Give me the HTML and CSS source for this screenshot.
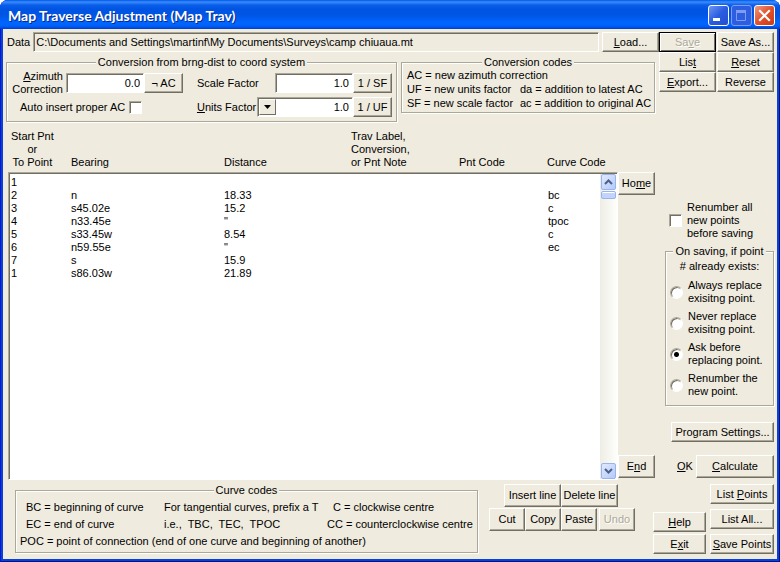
FILE: index.html
```html
<!DOCTYPE html>
<html lang="en">
<head>
    <meta charset="UTF-8">
    <meta name="viewport" content="width=device-width, initial-scale=1.0">
    <title>Map Traverse Adjustment (Map Trav)</title>
    <link rel="stylesheet" href="styles.css">
</head>
<body>
    <div class="window">
        <header class="titlebar">
            <h1>Map Traverse Adjustment (Map Trav)</h1>
            <button type="button" class="caption-btn" aria-label="Minimize">
                <svg width="19" height="19" viewBox="0 0 19 19"><path d="M4 12h7v3H4z" fill="#fff"/></svg>
            </button>
            <button type="button" class="caption-btn maximize" aria-label="Maximize" disabled>
                <svg width="19" height="19" viewBox="0 0 19 19"><path d="M4.500 5.500h9v9h-9z" fill="none" stroke="#7f9df0"/><path d="M4 4h10v3H4z" fill="#7f9df0"/></svg>
            </button>
            <button type="button" class="caption-btn close" aria-label="Close">
                <svg width="19" height="19" viewBox="0 0 19 19"><path d="M5 5l9 9M14 5l-9 9" stroke="#fff" stroke-width="2.200" stroke-linecap="square"/></svg>
            </button>
        </header>

        <main class="client">
            <section class="top">
                <div class="top-left">
                    <div class="data-row">
                        <label for="data-file">Data</label>
                        <input id="data-file" class="sunken path" type="text" readonly value="C:\Documents and Settings\martinf\My Documents\Surveys\camp chiuaua.mt">
                        <button type="button" class="btn load"><u>L</u>oad...</button>
                    </div>
                    <div class="groups">
                        <fieldset class="conversion">
                            <legend>Conversion from brng-dist to coord system</legend>
                            <div class="conv-cols">
                                <div class="conv-left">
                                    <div class="conv-row">
                                        <label for="azimuth" class="azimuth-label"><u>A</u>zimuth<br>Correction</label>
                                        <input id="azimuth" class="sunken number" type="text" value="0.0">
                                        <button type="button" class="btn unit">¬ AC</button>
                                    </div>
                                    <div class="conv-row auto-row">
                                        <label for="auto-ac">Auto insert proper AC</label>
                                        <input id="auto-ac" type="checkbox">
                                    </div>
                                </div>
                                <div class="conv-right">
                                    <div class="conv-row">
                                        <label for="scale">Scale Factor</label>
                                        <input id="scale" class="sunken number" type="text" value="1.0">
                                        <button type="button" class="btn unit">1 / SF</button>
                                    </div>
                                    <div class="conv-row">
                                        <label for="units"><u>U</u>nits Factor</label>
                                        <div class="sunken combo">
                                            <span class="combo-arrow" aria-hidden="true"><svg width="7" height="4" viewBox="0 0 7 4"><path d="M0 0h7L3.500 4z"/></svg></span>
                                            <select id="units"><option>1.0</option></select>
                                        </div>
                                        <button type="button" class="btn unit">1 / UF</button>
                                    </div>
                                </div>
                            </div>
                        </fieldset>
                        <fieldset class="codes">
                            <legend>Conversion codes</legend>
                            <div class="codes-grid">
                                <span class="wide">AC = new azimuth correction</span>
                                <span>UF = new units factor</span>
                                <span>da = addition to latest AC</span>
                                <span>SF = new scale factor</span>
                                <span>ac = addition to original AC</span>
                            </div>
                        </fieldset>
                    </div>
                </div>
                <div class="file-buttons">
                    <button type="button" class="btn default" disabled>Sa<u>v</u>e</button>
                    <button type="button" class="btn">Save As...</button>
                    <button type="button" class="btn">Lis<u>t</u></button>
                    <button type="button" class="btn"><u>R</u>eset</button>
                    <button type="button" class="btn"><u>E</u>xport...</button>
                    <button type="button" class="btn">Reverse</button>
                </div>
            </section>

            <section class="middle">
                <div class="list-area">
                    <div class="list-head">
                        <span class="start">Start Pnt<br>or<br>To Point</span>
                        <span>Bearing</span>
                        <span>Distance</span>
                        <span>Trav Label,<br>Conversion,<br>or Pnt Note</span>
                        <span>Pnt Code</span>
                        <span>Curve Code</span>
                    </div>
                    <div class="list sunken">
                        <table class="points">
                            <colgroup><col class="c-point"><col class="c-bearing"><col class="c-distance"><col class="c-label"><col class="c-code"><col></colgroup>
                            <tbody>
                                <tr><td>1</td><td></td><td></td><td></td><td></td><td></td></tr>
                                <tr><td>2</td><td>n</td><td>18.33</td><td></td><td></td><td>bc</td></tr>
                                <tr><td>3</td><td>s45.02e</td><td>15.2</td><td></td><td></td><td>c</td></tr>
                                <tr><td>4</td><td>n33.45e</td><td>"</td><td></td><td></td><td>tpoc</td></tr>
                                <tr><td>5</td><td>s33.45w</td><td>8.54</td><td></td><td></td><td>c</td></tr>
                                <tr><td>6</td><td>n59.55e</td><td>"</td><td></td><td></td><td>ec</td></tr>
                                <tr><td>7</td><td>s</td><td>15.9</td><td></td><td></td><td></td></tr>
                                <tr><td>1</td><td>s86.03w</td><td>21.89</td><td></td><td></td><td></td></tr>
                            </tbody>
                        </table>
                        <div class="scrollbar">
                            <button type="button" class="scroll-btn" aria-label="Scroll up"><svg width="9" height="6" viewBox="0 0 9 6"><path d="M1 5l3.500-3.500L8 5" fill="none" stroke="#4d6185" stroke-width="2"/></svg></button>
                            <div class="thumb"></div>
                            <button type="button" class="scroll-btn down" aria-label="Scroll down"><svg width="9" height="6" viewBox="0 0 9 6"><path d="M1 1l3.500 3.500L8 1" fill="none" stroke="#4d6185" stroke-width="2"/></svg></button>
                        </div>
                    </div>
                </div>
                <div class="jump">
                    <button type="button" class="btn tall">Ho<u>m</u>e</button>
                    <button type="button" class="btn tall">E<u>n</u>d</button>
                </div>
                <aside class="side">
                    <div class="option">
                        <input id="renumber" type="checkbox">
                        <label for="renumber">Renumber all<br>new points<br>before saving</label>
                    </div>
                    <fieldset class="saving">
                        <legend>On saving, if point</legend>
                        <p># already exists:</p>
                        <div class="option">
                            <input id="always" type="radio" name="exists">
                            <label for="always">Always replace<br>exisitng point.</label>
                        </div>
                        <div class="option">
                            <input id="never" type="radio" name="exists">
                            <label for="never">Never replace<br>exisitng point.</label>
                        </div>
                        <div class="option">
                            <input id="ask" type="radio" name="exists" checked>
                            <label for="ask">Ask before<br>replacing point.</label>
                        </div>
                        <div class="option">
                            <input id="new-point" type="radio" name="exists">
                            <label for="new-point">Renumber the<br>new point.</label>
                        </div>
                    </fieldset>
                    <button type="button" class="btn settings">Program Settings...</button>
                    <div class="ok-row">
                        <span><u>O</u>K</span>
                        <button type="button" class="btn tall"><u>C</u>alculate</button>
                    </div>
                </aside>
            </section>

            <section class="bottom">
                <fieldset class="curves">
                    <legend>Curve codes</legend>
                    <div class="curve-grid">
                        <span>BC = beginning of curve</span>
                        <span>For tangential curves, prefix a T</span>
                        <span class="clockwise">C = clockwise centre</span>
                        <span>EC = end of curve</span>
                        <span>i.e.,&nbsp; TBC,&nbsp; TEC,&nbsp; TPOC</span>
                        <span>CC = counterclockwise centre</span>
                    </div>
                    <p>POC = point of connection (end of one curve and beginning of another)</p>
                </fieldset>
                <div class="edit-buttons">
                    <div class="line-row">
                        <button type="button" class="btn tall">Insert line</button>
                        <button type="button" class="btn tall">Delete line</button>
                    </div>
                    <div class="clip-row">
                        <button type="button" class="btn tall">Cut</button>
                        <button type="button" class="btn tall">Copy</button>
                        <button type="button" class="btn tall">Paste</button>
                        <button type="button" class="btn tall" disabled>Undo</button>
                    </div>
                </div>
                <div class="exit-buttons">
                    <button type="button" class="btn"><u>H</u>elp</button>
                    <button type="button" class="btn">E<u>x</u>it</button>
                </div>
                <div class="point-buttons">
                    <button type="button" class="btn">List <u>P</u>oints</button>
                    <button type="button" class="btn">List All...</button>
                    <button type="button" class="btn"><u>S</u>ave Points</button>
                </div>
            </section>
        </main>
    </div>
</body>
</html>
```
FILE: styles.css
```css
* {
    box-sizing: border-box;
}
body {
    margin: 0;
    background: #fff;
    color: #000;
    font: 11px/13px "Liberation Sans", Arial, sans-serif;
}
input, select, button {
    margin: 0;
    font: inherit;
    color: inherit;
}
p {
    margin: 0;
}
.window {
    display: flex;
    flex-direction: column;
    min-height: 100vh;
    padding: 0 3px 3px;
    background: #0840d8;
    border-radius: 8px 8px 0 0;
    box-shadow: inset 1px 0 #0019cf, inset -1px -1px #00138c;
    overflow: hidden;
}

/* Title bar */
.titlebar {
    display: flex;
    align-items: center;
    gap: 2px;
    height: 29px;
    margin: 0 -3px;
    padding: 2px 5px 0 8px;
    background: linear-gradient(#0058e6 0, #3a8cff 2px, #0a5fe8 5px, #0054e3 9px, #0055e5 15px, #0066ff 23px, #0060f8 26px, #003dd0 29px);
}
.titlebar h1 {
    flex: 1;
    margin: 0;
    color: #fff;
    font: 700 14px/18px Lato, "Open Sans", sans-serif;
    text-shadow: 1px 1px #0a2a8c;
}
.caption-btn {
    width: 21px;
    height: 21px;
    padding: 0;
    border: 1px solid #fff;
    border-radius: 3px;
    background: linear-gradient(135deg, #6f97f5, #2a5ce0 50%, #2250d0);
}
.caption-btn svg {
    display: block;
}
.caption-btn.maximize {
    border-color: #7f9df0;
    background: #2d5de0;
}
.caption-btn.close {
    background: linear-gradient(135deg, #f09a80, #e2502c 50%, #c83c14);
}

/* Controls */
.client {
    flex: 1;
    display: flex;
    flex-direction: column;
    padding: 3px 3px 5px 3px;
    background: #efebde;
}
.btn {
    height: 20px;
    padding: 0;
    border: 1px solid;
    border-color: #fff #716f64 #716f64 #fff;
    background: #efebde;
    box-shadow: inset -1px -1px #aca899;
    text-align: center;
    white-space: nowrap;
}
.btn.tall {
    height: 23px;
}
.btn:disabled {
    color: #aca899;
    text-shadow: 1px 1px #fff;
}
.btn.default {
    border-color: #000;
    box-shadow: inset 1px 1px #fff, inset -1px -1px #716f64;
}
.sunken {
    border: 1px solid;
    border-color: #aca899 #fff #fff #aca899;
    border-radius: 0;
    box-shadow: inset 1px 1px #716f64;
    background: #fff;
}
input[type="checkbox"], input[type="radio"] {
    appearance: none;
    flex: none;
    width: 13px;
    height: 13px;
    border: 1px solid;
    border-color: #aca899 #fff #fff #aca899;
    background: #fff;
    box-shadow: inset 1px 1px #716f64;
}
input[type="radio"] {
    border-radius: 50%;
}
input[type="radio"]:checked {
    background: radial-gradient(circle, #000 2px, #fff 3px);
}
fieldset {
    min-width: 0;
    margin: 0;
    padding: 0;
    border: 1px solid #aca899;
    box-shadow: 1px 1px #fff, inset 1px 1px #fff;
}
legend {
    margin: 0 auto;
    padding: 0 2px;
    background: #efebde;
}

/* File and conversion */
.top {
    display: flex;
}
.top-left {
    flex: 1;
}
.data-row {
    display: flex;
    align-items: center;
    padding-left: 1px;
}
.path {
    flex: 1;
    height: 20px;
    margin: 0 3px;
    padding: 0 2px;
    background: #efebde;
}
.load {
    width: 57px;
}
.groups {
    display: flex;
    align-items: flex-start;
    gap: 4px;
    padding: 4px 4px 0 0;
}
.conversion {
    flex: 392;
}
.conv-cols {
    display: flex;
    justify-content: space-between;
    padding: 1px 4px 4px 5px;
}
.conv-left, .conv-right {
    display: flex;
    flex-direction: column;
}
.conv-right {
    gap: 4px;
    padding-top: 3px;
    width: 195px;
}
.conv-left {
    gap: 2px;
}
.conv-row {
    display: flex;
    align-items: center;
    justify-content: space-between;
}
.azimuth-label {
    width: 51px;
    margin-right: 3px;
    text-align: right;
}
.number {
    width: 78px;
    height: 20px;
    padding: 0 3px;
    text-align: right;
}
.conv-right .number {
    margin-left: auto;
}
.unit {
    width: 39px;
}
.auto-row {
    justify-content: flex-start;
    gap: 4px;
    padding: 3px 0 0 8px;
}
.combo {
    display: flex;
    width: 96px;
    height: 20px;
    margin-left: auto;
    padding: 1px;
}
.combo-arrow {
    display: grid;
    place-items: center;
    width: 17px;
    border: 1px solid;
    border-color: #fff #716f64 #716f64 #fff;
    background: #efebde;
}
.combo select {
    flex: 1;
    appearance: none;
    padding: 0 2px;
    border: 0;
    background: transparent;
    text-align: right;
    text-align-last: right;
}
.codes {
    flex: 254;
}
.codes-grid {
    display: grid;
    grid-template-columns: 113px 1fr;
    grid-auto-rows: 14px;
    padding: 0 0 1px 5px;
    white-space: nowrap;
}
.codes-grid .wide {
    grid-column: 1 / -1;
}
.file-buttons {
    display: grid;
    grid-template-columns: 57px 57px;
    align-content: start;
    column-gap: 1px;
}

/* Traverse list */
.middle {
    flex: 1;
    display: flex;
    padding: 8px 0 0 2px;
}
.list-area {
    flex: 1;
    display: flex;
    flex-direction: column;
}
.list-head {
    display: grid;
    grid-template-columns: 60px 153px 127px 108px 88px 1fr;
    align-items: end;
    padding: 0 0 3px 3px;
}
.list-head .start {
    justify-self: start;
    text-align: center;
}
.list {
    flex: 1;
    display: flex;
    align-items: flex-start;
    padding: 1px 0 0 1px;
}
.points {
    flex: 1;
    margin-top: 2px;
    border-collapse: collapse;
    table-layout: fixed;
}
.points td {
    height: 13px;
    padding: 0 1px;
}
.c-point { width: 60px; }
.c-bearing { width: 153px; }
.c-distance { width: 127px; }
.c-label { width: 108px; }
.c-code { width: 89px; }
.scrollbar {
    align-self: stretch;
    display: flex;
    flex-direction: column;
    width: 17px;
    padding: 0 1px;
    background: linear-gradient(90deg, #eeede5, #fefefb);
}
.scroll-btn {
    display: grid;
    place-items: center;
    height: 16px;
    padding: 0;
    border: 1px solid #98b4ef;
    border-radius: 2px;
    background: linear-gradient(135deg, #e0eaff, #b4c9fb);
}
.thumb {
    height: 8px;
    margin-top: 1px;
    border: 1px solid #98b4ef;
    border-radius: 2px;
    background: #c2d4fc;
    box-shadow: inset 0 1px #fff;
}
.scroll-btn.down {
    margin-top: auto;
}
.jump {
    display: flex;
    flex-direction: column;
    justify-content: space-between;
    width: 37px;
    padding: 42px 0 2px;
}

/* Saving options */
.side {
    display: flex;
    flex-direction: column;
    width: 109px;
    margin-left: 10px;
    padding: 71px 0 2px;
}
.option {
    display: flex;
    align-items: center;
    gap: 5px;
    padding-left: 4px;
}
.saving {
    margin-top: 5px;
    padding-bottom: 7px;
}
.saving p {
    padding: 2px 0 6px;
    text-align: center;
}
.saving .option + .option {
    margin-top: 5px;
}
.settings {
    margin: 16px 0 auto 6px;
}
.ok-row {
    display: flex;
    align-items: center;
    justify-content: space-between;
    padding-left: 12px;
}
.ok-row .btn {
    width: 78px;
}

/* Curve codes and actions */
.bottom {
    display: flex;
    padding-top: 4px;
}
.curves {
    flex: 1;
    margin: 0 0 1px 9px;
}
.curve-grid {
    display: grid;
    grid-template-columns: 138px 163px 1fr;
    row-gap: 4px;
    padding: 4px 0 4px 10px;
    white-space: nowrap;
}
.curve-grid .clockwise {
    padding-left: 6px;
}
.curves p {
    padding: 0 0 4px 4px;
}
.edit-buttons {
    display: flex;
    flex-direction: column;
    gap: 1px;
    margin-left: 11px;
}
.line-row, .clip-row {
    display: flex;
}
.line-row {
    padding-left: 15px;
}
.line-row .btn {
    width: 57px;
}
.clip-row .btn {
    width: 36px;
}
.clip-row .btn:disabled {
    margin-left: 2px;
}
.exit-buttons {
    display: flex;
    flex-direction: column;
    justify-content: flex-end;
    gap: 2px;
    width: 53px;
    margin-left: 18px;
}
.point-buttons {
    display: flex;
    flex-direction: column;
    justify-content: space-between;
    gap: 5px;
    width: 64px;
    margin-left: 4px;
}
```
